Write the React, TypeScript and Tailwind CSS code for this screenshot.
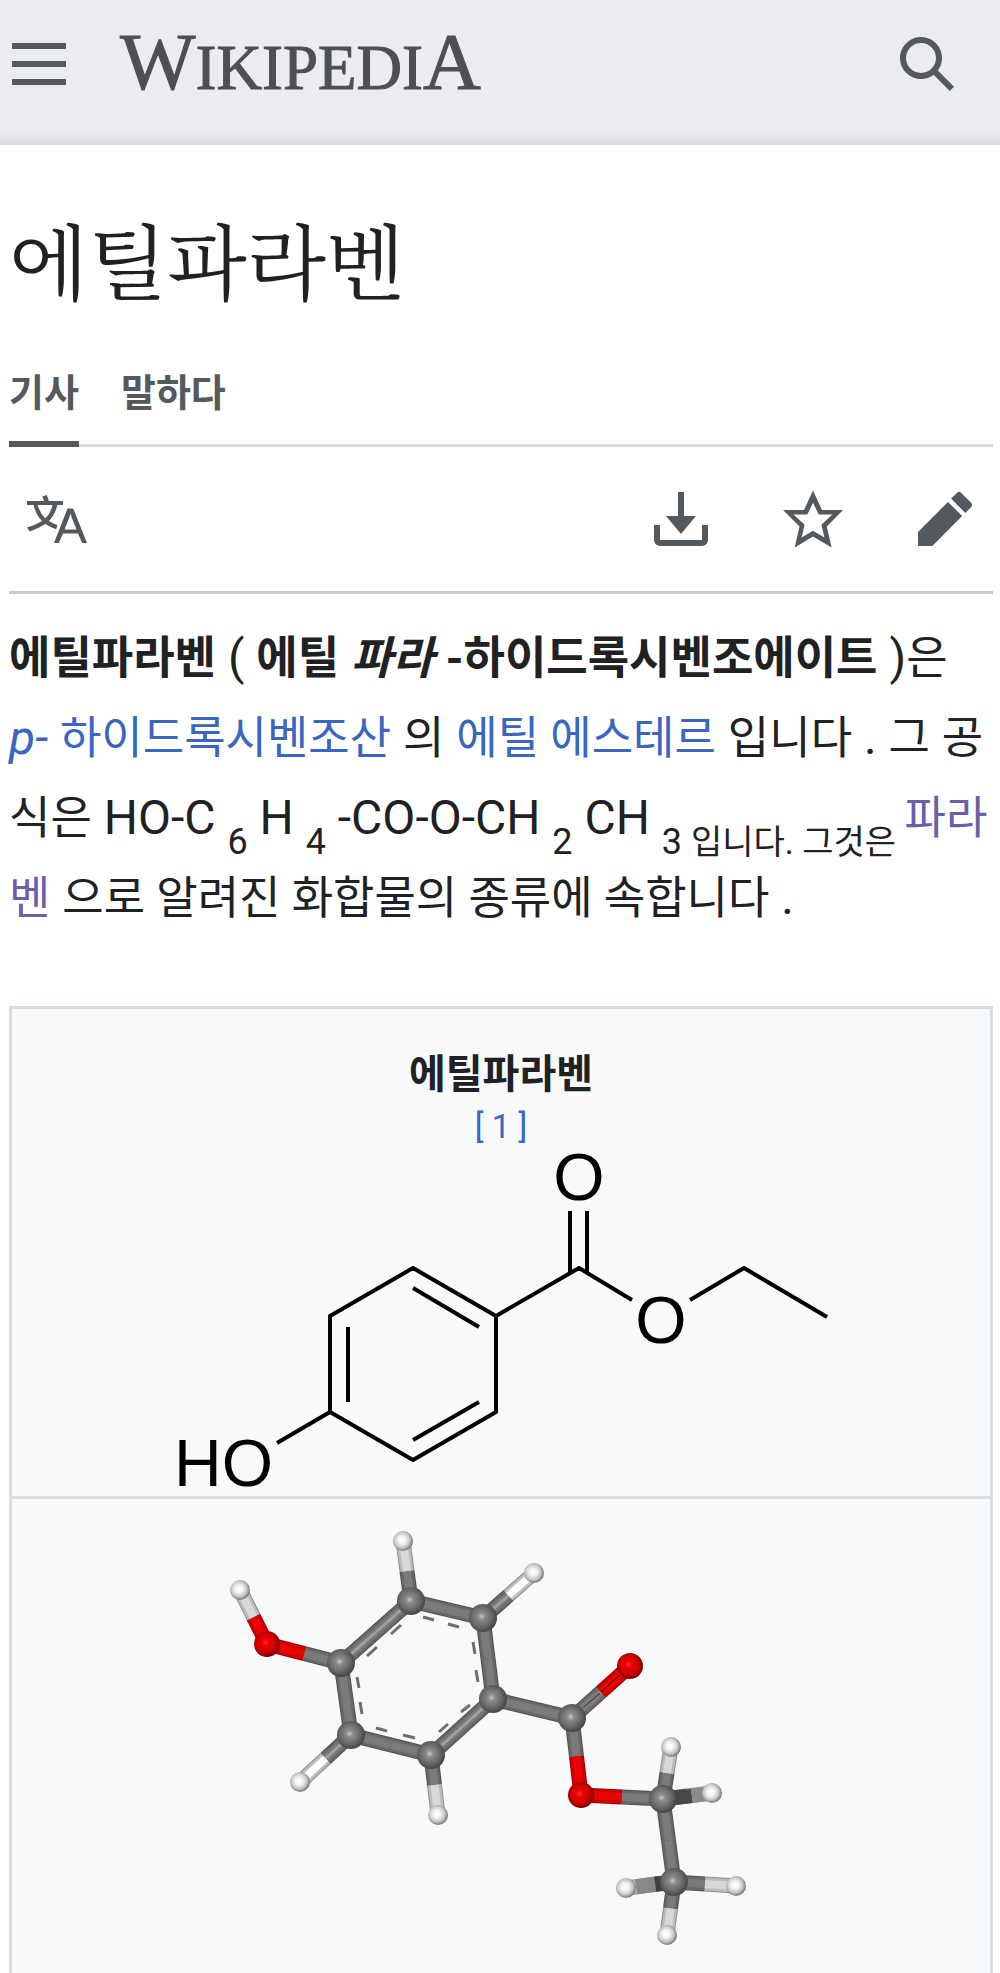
import type { ReactNode } from "react";

type Element = "C" | "O" | "H";
type Atom = { el: Element; x: number; y: number };

const ATOM_RADIUS: Record<Element, number> = { C: 14, O: 13, H: 10 };

// edge, body and highlight colours of each half bond
const BOND_COLORS: Record<Element, [string, string, string]> = {
  C: ["#505050", "#686868", "#7a7a7a"],
  O: ["#9c0000", "#d00000", "#e80404"],
  H: ["#8c8c8c", "#bcbcbc", "#d8d8d8"],
};

const ATOMS: Record<string, Atom> = {
  h1: { el: "H", x: 403, y: 1541 },
  h2: { el: "H", x: 240, y: 1590 },
  h3: { el: "H", x: 300, y: 1782 },
  h4: { el: "H", x: 438, y: 1815 },
  h5: { el: "H", x: 534, y: 1573 },
  h6: { el: "H", x: 671, y: 1747 },
  h7: { el: "H", x: 712, y: 1793 },
  h8: { el: "H", x: 626, y: 1888 },
  h9: { el: "H", x: 736, y: 1886 },
  h10: { el: "H", x: 667, y: 1935 },
  o1: { el: "O", x: 267, y: 1644 },
  o2: { el: "O", x: 630, y: 1666 },
  o3: { el: "O", x: 581, y: 1795 },
  c1: { el: "C", x: 411, y: 1601 },
  c2: { el: "C", x: 483, y: 1618 },
  c3: { el: "C", x: 493, y: 1699 },
  c4: { el: "C", x: 431, y: 1755 },
  c5: { el: "C", x: 351, y: 1735 },
  c6: { el: "C", x: 341, y: 1663 },
  c7: { el: "C", x: 572, y: 1718 },
  c8: { el: "C", x: 663, y: 1799 },
  c9: { el: "C", x: 674, y: 1882 },
};

const BONDS: [string, string][] = [
  ["c1", "c2"],
  ["c2", "c3"],
  ["c3", "c4"],
  ["c4", "c5"],
  ["c5", "c6"],
  ["c6", "c1"],
  ["c1", "h1"],
  ["c2", "h5"],
  ["c4", "h4"],
  ["c5", "h3"],
  ["c6", "o1"],
  ["o1", "h2"],
  ["c3", "c7"],
  ["c7", "o2"],
  ["c7", "o3"],
  ["o3", "c8"],
  ["c8", "h6"],
  ["c8", "h7"],
  ["c8", "c9"],
  ["c9", "h8"],
  ["c9", "h9"],
  ["c9", "h10"],
];

const HalfBond = ({ from, to, el }: { from: Atom; to: Atom; el: Element }) => {
  const [edge, body, light] = BOND_COLORS[el];
  const mx = (from.x + to.x) / 2;
  const my = (from.y + to.y) / 2;
  const line = { x1: from.x, y1: from.y, x2: mx, y2: my };
  // bonds that rise to the right face the light
  const facing = (to.x - from.x) * (to.y - from.y) < -900;
  return (
    <g>
      <line {...line} stroke={edge} strokeWidth={15} />
      <line {...line} stroke={body} strokeWidth={13} />
      <line {...line} stroke={light} strokeWidth={8} />
      {facing && (
        <line
          {...line}
          stroke={el === "C" ? "#a0a0a0" : el === "H" ? "#ffffff" : "#ff2a2a"}
          strokeWidth={el === "H" ? 7 : 3}
        />
      )}
    </g>
  );
};

const BallAndStick = () => (
  <svg
    viewBox="226 1520 550 440"
    className="block w-[550px] max-w-full"
    role="img"
    aria-label="에틸파라벤 분자 모형"
  >
    <defs>
      <radialGradient id="ball-C" cx="0.45" cy="0.45" r="0.56">
        <stop offset="0" stopColor="#c8c8c8" />
        <stop offset="0.22" stopColor="#8c8c8c" />
        <stop offset="0.65" stopColor="#686868" />
        <stop offset="1" stopColor="#444444" />
      </radialGradient>
      <radialGradient id="ball-O" cx="0.45" cy="0.45" r="0.56">
        <stop offset="0" stopColor="#ff3030" />
        <stop offset="0.25" stopColor="#ee0000" />
        <stop offset="0.65" stopColor="#cc0000" />
        <stop offset="1" stopColor="#7c0000" />
      </radialGradient>
      <radialGradient id="ball-H" cx="0.45" cy="0.45" r="0.56">
        <stop offset="0" stopColor="#ffffff" />
        <stop offset="0.35" stopColor="#f2f2f2" />
        <stop offset="0.7" stopColor="#c4c4c4" />
        <stop offset="1" stopColor="#707070" />
      </radialGradient>
    </defs>
    {BONDS.map(([a, b]) => (
      <g key={a + b}>
        <HalfBond from={ATOMS[a]} to={ATOMS[b]} el={ATOMS[a].el} />
        <HalfBond from={ATOMS[b]} to={ATOMS[a]} el={ATOMS[b].el} />
      </g>
    ))}
    {/* gap of the C=O double bond */}
    <path d="M583 1708 600 1693" stroke="#505050" strokeWidth={2} />
    <path d="M601 1692 620 1675" stroke="#900000" strokeWidth={2} />
    {/* back sides of the tilted C-H bonds */}
    <path d="M673 1798 692 1796" stroke="#484848" strokeWidth={14} />
    <path d="M692 1796 706 1794" stroke="#8c8c8c" strokeWidth={14} />
    <path d="M666 1883 655 1884" stroke="#404040" strokeWidth={15} />
    <path d="M655 1884 636 1887" stroke="#888888" strokeWidth={15} />
    {/* aromatic ring */}
    <path
      d="M423 1617l11 3M448 1624l11 3M473 1642l2 12M476 1670l2 12M470 1705l-9 7M448 1724l-9 8M415 1738l-12-3M387 1731l-11-3M362 1714l-2-12M359 1688l-2-11M367 1656l10-9M391 1634l10-9"
      stroke="#6e6e6e"
      strokeWidth={3}
      fill="none"
    />
    {Object.entries(ATOMS).map(([id, { el, x, y }]) => (
      <circle
        key={id}
        cx={x}
        cy={y}
        r={ATOM_RADIUS[el]}
        fill={
          el === "C" ? "url(#ball-C)" : el === "O" ? "url(#ball-O)" : "url(#ball-H)"
        }
      />
    ))}
  </svg>
);

const SkeletalFormula = () => (
  <svg
    viewBox="170 1150 662 340"
    className="block w-[662px] max-w-full"
    role="img"
    aria-label="에틸파라벤 구조식"
  >
    <g fill="none" stroke="#000" strokeWidth={4} strokeLinejoin="round">
      <path d="M413 1268 496 1316V1412L413 1460 330 1412V1316Z" />
      <path d="M413 1288 479 1327M348 1327V1402M413 1440 479 1402" />
      <path d="M330 1412 277 1443M496 1316 579 1268 632 1300" />
      <path d="M570 1211V1272M587 1211V1272" />
      <path d="M690 1300 744 1268 827 1317" />
    </g>
    <g className="font-['Liberation_Sans',sans-serif] text-[66px]">
      <text x={174} y={1486}>
        HO
      </text>
      <text x={579} y={1200} textAnchor="middle">
        O
      </text>
      <text x={661} y={1343} textAnchor="middle">
        O
      </text>
    </g>
  </svg>
);

const Icon = ({ path }: { path: string }) => (
  <svg viewBox="0 0 20 20" className="block size-[60px]" fill="currentColor">
    <path fillRule="evenodd" d={path} />
  </svg>
);

const ICONS = {
  menu: "M1 3v2h18V3zm0 8h18V9H1zm0 6h18v-2H1z",
  search:
    "M12.2 13.6a7 7 0 1 1 1.4-1.4l5.4 5.4-1.4 1.4zM3 8a5 5 0 1 0 10 0A5 5 0 0 0 3 8z",
  language:
    "M20 18h-1.6L17 14.8h-5L10.6 18H9l4.5-11.5h1.9zm-3.5-4.5L14.9 9.5l-.4-1.3-.4 1.3-1.6 4zm-6.3-1.4a13.4 13.4 0 0 1-2.9-1.4 11.5 11.5 0 0 0 2.8-5.4H12V4H7.3a4 4 0 0 0-.2-.6L6.6 2l-1.5.5s.4.9.6 1.5H0v1.3h2.2A11.2 11.2 0 0 0 5 10.7a17.2 17.2 0 0 1-5 2.1q.6.8.9 1.4a23.3 23.3 0 0 0 5.2-2.5 15.6 15.6 0 0 0 3.6 1.7zM3.6 5.3h4.9a8.1 8.1 0 0 1-2.4 4.5 9.1 9.1 0 0 1-2.5-4.5",
  download:
    "M17 12v5H3v-5H1v5a2 2 0 0 0 2 2h14a2 2 0 0 0 2-2v-5zM10 15l5-6h-4V1H9v8H5z",
  star: "M20 7h-7L10 .5 7 7H0l5.5 5.5-1.6 7 6.1-3.7 6.2 3.7-1.6-7zm-10 6.9-3.8 2.3 1-4.3-3.7-3.4h4.6L10 4.6l1.9 3.9h4.6l-3.7 3.4 1 4.3z",
  edit: "m16.8 8 1.9-2a1 1 0 0 0 0-1.4l-3.3-3.3a1 1 0 0 0-1.4 0L12 3.2zM11 4.3l-10 10V19h4.8l9.9-10z",
};

const IconButton = ({ label, path }: { label: string; path: string }) => (
  <button type="button" aria-label={label} className="text-[#54595d]">
    <Icon path={path} />
  </button>
);

// Hangul runs a little smaller than the Latin letters around it
const Ko = ({ children }: { children: ReactNode }) => (
  <span className="text-[45px] leading-none">{children}</span>
);

const Sub = ({ children }: { children: ReactNode }) => (
  <sub className="align-sub text-4xl leading-none">{children}</sub>
);

const link = "text-[#3a66bf]";
const visited = "text-[#6b60a8]";

export default function App() {
  return (
    <div className="bg-white font-[Roboto,'Noto_Sans_CJK_KR',sans-serif] text-[#202122]">
      <header className="flex h-[145px] items-start bg-[linear-gradient(to_top,#d9dbdd,#eaecf0_12px)] pt-[34px] pr-[43px] pl-[9px]">
        <IconButton label="메뉴" path={ICONS.menu} />
        <a
          href="#"
          className="ml-[51px] flex items-baseline font-['Liberation_Serif',serif] text-[80px] leading-[56px] text-[#4d4f52] [-webkit-text-stroke:1px_#4d4f52]"
        >
          W<span className="text-[63px]">IKIPEDI</span>A
        </a>
        <div className="ml-auto">
          <IconButton label="검색" path={ICONS.search} />
        </div>
      </header>

      <main className="pr-[7px] pl-[9px]">
        <h1 className="pt-[53px] font-['Noto_Serif_CJK_KR','Noto_Sans_CJK_KR',serif] text-[82px] leading-[120px] font-normal">
          에틸파라벤
        </h1>

        <nav className="mt-[37px] flex gap-[42px] border-b-3 border-[#d8dce0] text-[38px] leading-[76px] font-bold text-[#54595d]">
          <a href="#" className="-mb-[3px] border-b-6 border-[#54595d] pb-[10px]">
            기사
          </a>
          <a href="#">말하다</a>
        </nav>

        <div className="flex items-center gap-[72px] border-b-3 border-[#c8ccd1] px-[18px] py-[42px]">
          <IconButton label="언어" path={ICONS.language} />
          <div className="ml-auto flex gap-[72px]">
            <IconButton label="다운로드" path={ICONS.download} />
            <IconButton label="주시" path={ICONS.star} />
            <IconButton label="편집" path={ICONS.edit} />
          </div>
        </div>

        <p className="mt-[24px] text-5xl leading-[80px]">
          <b>
            <Ko>에틸파라벤</Ko>
          </b>{" "}
          ({" "}
          <b>
            <Ko>에틸</Ko>{" "}
            <i>
              <Ko>파라</Ko>
            </i>{" "}
            <Ko>-하이드록시벤조에이트</Ko>
          </b>{" "}
          )<Ko>은</Ko>
          <br />
          <a href="#" className={link}>
            <i>p-</i> <Ko>하이드록시벤조산</Ko>
          </a>{" "}
          <Ko>의</Ko>{" "}
          <a href="#" className={link}>
            <Ko>에틸 에스테르</Ko>
          </a>{" "}
          <Ko>입니다</Ko> . <Ko>그</Ko> <Ko>공식은</Ko> HO-C <Sub>6</Sub> H{" "}
          <Sub>4</Sub> -CO-O-CH <Sub>2</Sub> CH{" "}
          <Sub>
            3 <span className="text-[34px]">입니다. 그것은 </span>
          </Sub>
          <a href="#" className={visited}>
            <Ko>파라벤</Ko>
          </a>{" "}
          <Ko>으로 알려진 화합물의 종류에 속합니다</Ko> .
        </p>

        <table className="mt-[68px] w-full border-3 border-b-0 border-[#d8dce3] bg-[#f8f9fb]">
          <caption className="sr-only">에틸파라벤</caption>
          <tbody>
            <tr>
              <td className="pt-[38px] pb-[6px]">
                <div className="text-center text-[40px] leading-[56px] font-bold">
                  에틸파라벤
                </div>
                <div className="text-center text-[33px] leading-[47px]">
                  <a href="#" className={link}>
                    [ 1 ]
                  </a>
                </div>
                <div className="flex justify-center">
                  <SkeletalFormula />
                </div>
              </td>
            </tr>
            <tr className="border-t-3 border-[#d8dce3]">
              <td className="pt-[21px] pb-[15px]">
                <div className="flex justify-center">
                  <BallAndStick />
                </div>
              </td>
            </tr>
          </tbody>
        </table>
      </main>
    </div>
  );
}
